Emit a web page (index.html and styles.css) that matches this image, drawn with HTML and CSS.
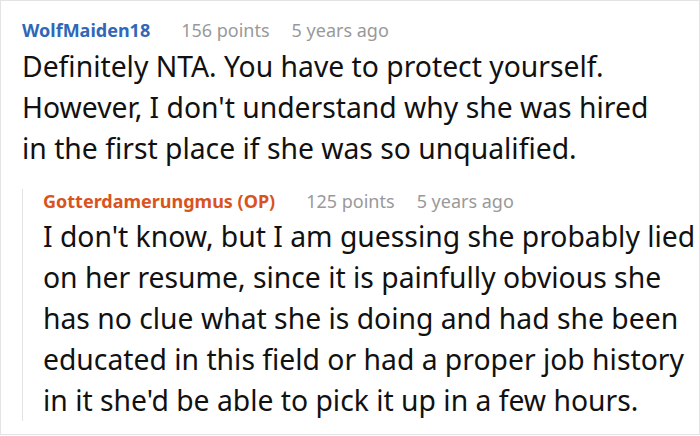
FILE: index.html
```html
<!DOCTYPE html>
<html>
<head>
<meta charset="utf-8">
<link rel="stylesheet" href="styles.css">
</head>
<body>
<div class="card">
  <div class="comment">
    <div class="meta">
      <span class="author">WolfMaiden18</span>
      <span class="points">156 points</span>
      <span class="time">5 years ago</span>
    </div>
    <div class="text">Definitely NTA. You have to protect yourself. However, I don't understand why she was hired in the first place if she was so unqualified.</div>
  </div>
  <div class="reply">
    <div class="meta">
      <span class="author op">Gotterdamerungmus (OP)</span>
      <span class="points">125 points</span>
      <span class="time">5 years ago</span>
    </div>
    <div class="text">I don't know, but I am guessing she probably lied on her resume, since it is painfully obvious she has no clue what she is doing and had she been educated in this field or had a proper job history in it she'd be able to pick it up in a few hours.</div>
  </div>
</div>
</body>
</html>
```
FILE: styles.css
```css
html, body {
  margin: 0;
  padding: 0;
  background: #ffffff;
}
.card {
  box-sizing: border-box;
  width: 700px;
  height: 435px;
  border: 1px solid #e3e3e3;
  padding: 17px 0 0 21px;
  overflow: hidden;
  font-family: "Noto Sans", "Open Sans", sans-serif;
}
.meta {
  display: flex;
  align-items: baseline;
  font-size: 18px;
  line-height: 24px;
}
.author {
  font-weight: bold;
  color: #3167b8;
  margin-right: 31px;
}
.author.op {
  color: #d9531e;
}
.points {
  color: #999999;
  margin-right: 22px;
}
.time {
  color: #999999;
}
.text {
  margin-top: 4px;
  max-width: 635px;
  font-size: 28.3px;
  line-height: 41px;
  color: #111111;
}
.reply {
  margin-top: 28px;
  border-left: 1px solid #e3e3e3;
  padding-left: 20px;
}
.reply .meta {
  margin-top: -8px;
}
.reply .text {
  margin-top: 3px;
  margin-bottom: -8px;
  max-width: none;
}
```
